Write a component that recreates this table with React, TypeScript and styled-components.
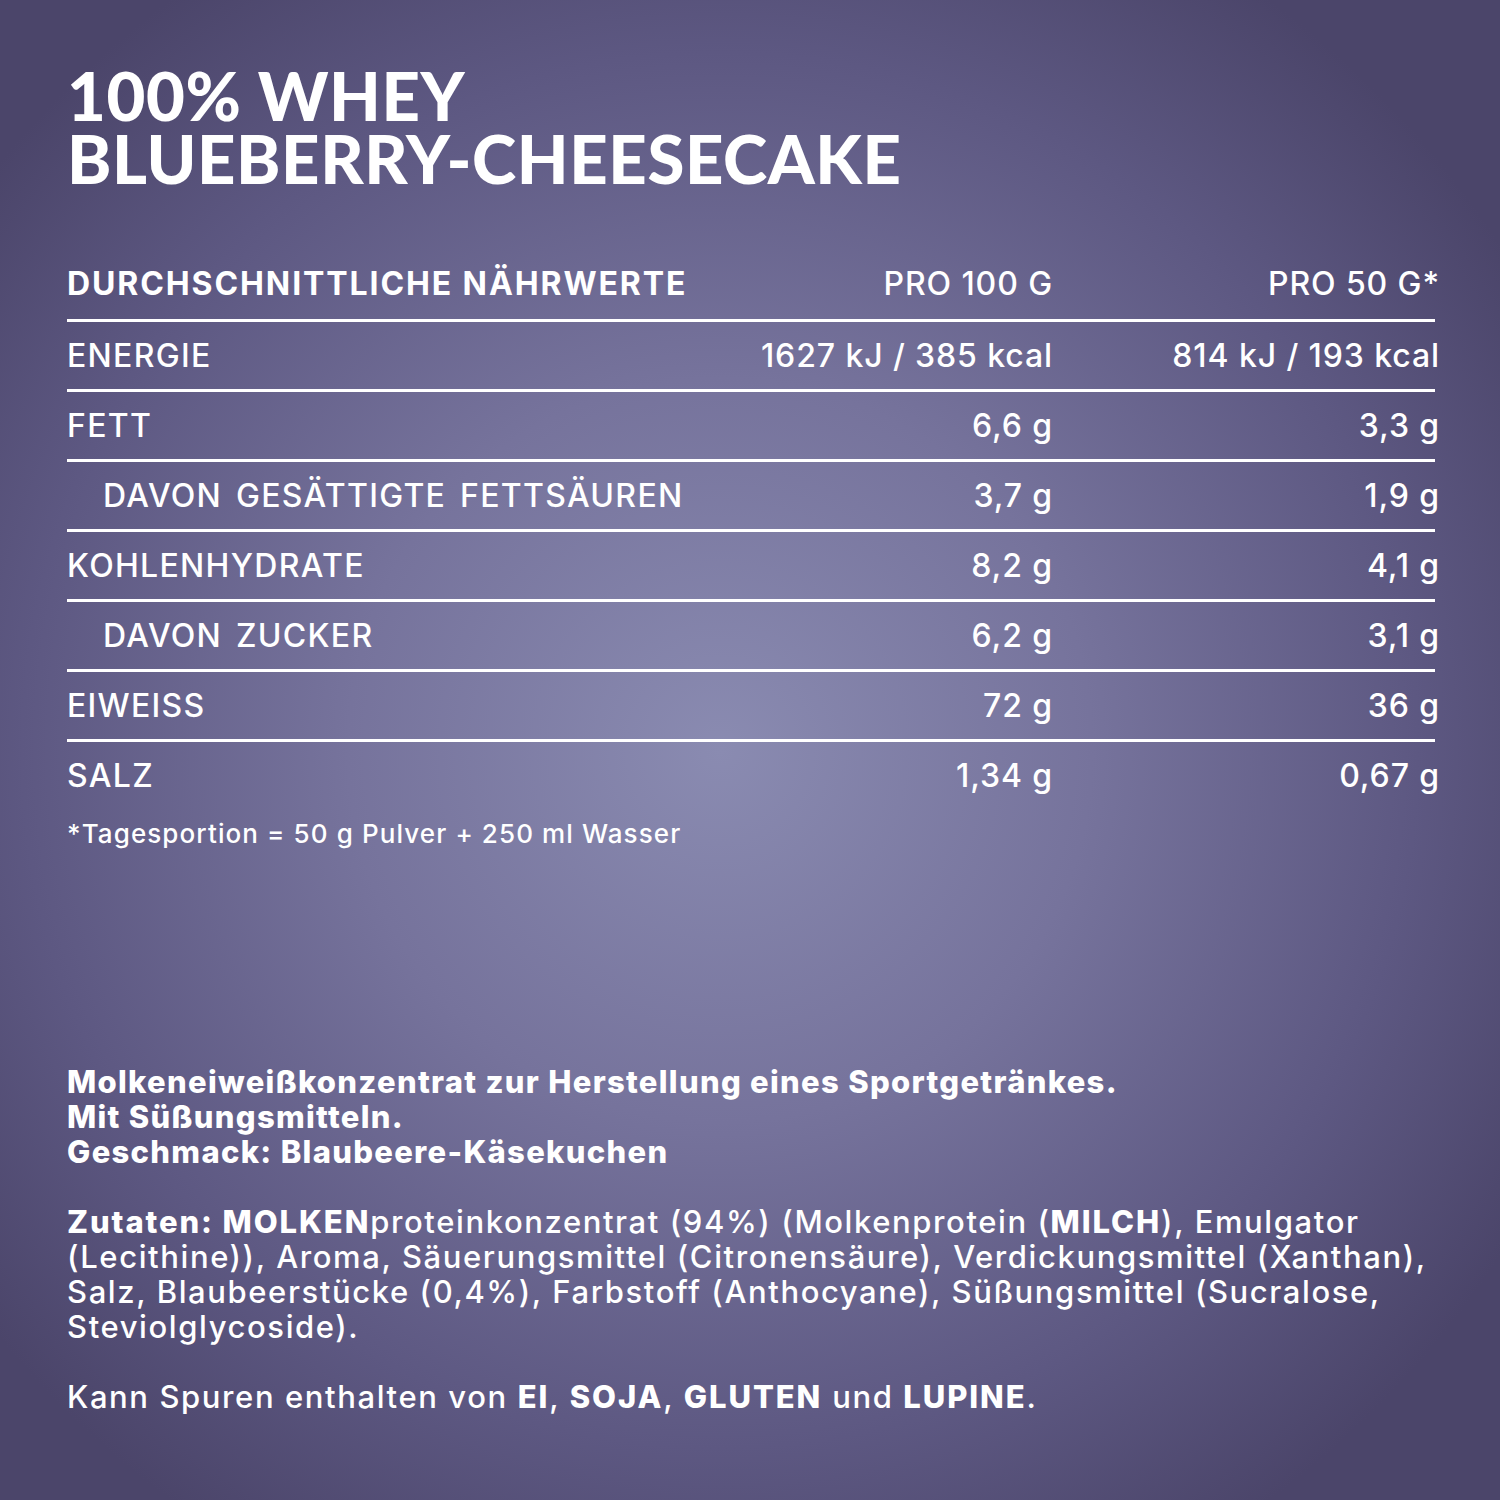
import React from 'react';
import styled, { createGlobalStyle } from 'styled-components';

const GlobalStyle = createGlobalStyle`
  html, body {
    margin: 0;
    padding: 0;
  }
  body {
    font-family: Inter, Lato, 'Noto Sans', sans-serif;
    color: #ffffff;
  }
`;

const Page = styled.main`
  width: 1500px;
  height: 1500px;
  box-sizing: border-box;
  padding: 64px 0 0 67px;
  background: radial-gradient(
    ellipse 62% 62% at 48% 50%,
    #8a8bb1 0%,
    #76739c 40%,
    #5d5882 75%,
    #4b456a 100%
  );
  display: flex;
  flex-direction: column;
`;

const Title = styled.h1`
  margin: 0;
  font-family: Lato, Inter, sans-serif;
  font-size: 67px;
  line-height: 63px;
  font-weight: 900;
  letter-spacing: 0.6px;
  text-transform: uppercase;
`;

const Table = styled.section`
  margin-top: 58px;
  width: 1368px;
`;

const Row = styled.div<{ $head?: boolean; $last?: boolean }>`
  display: grid;
  grid-template-columns: 1fr 363px 382px;
  align-items: center;
  height: ${(p) => (p.$head ? 71 : 67)}px;
  border-bottom: ${(p) => (p.$last ? 'none' : '3px solid #ffffff')};
  font-size: 32px;
  letter-spacing: 0.9px;
  font-weight: 500;
`;

const Label = styled.span<{ $indent?: boolean; $head?: boolean }>`
  padding-left: ${(p) => (p.$indent ? 36 : 0)}px;
  text-transform: uppercase;
  font-weight: ${(p) => (p.$head ? 700 : 500)};
  letter-spacing: ${(p) => (p.$head ? 1.9 : 1.3)}px;
  word-spacing: ${(p) => (p.$indent ? 4 : 0)}px;
`;

const Value = styled.span<{ $wide?: boolean }>`
  text-align: right;
  margin-right: ${(p) => (p.$wide ? -5 : 0)}px;
`;

const Footnote = styled.p`
  margin: 10px 0 0;
  font-size: 26px;
  line-height: 30px;
  font-weight: 500;
  letter-spacing: 1.1px;
`;

const Info = styled.section`
  margin-top: 215px;
  font-size: 31px;
  line-height: 35px;
  white-space: nowrap;
`;

const Lead = styled.p`
  margin: 0;
  font-weight: 800;
  letter-spacing: 1.3px;
`;

const Para = styled.p`
  margin: 35px 0 0;
  font-weight: 500;
  letter-spacing: 1.6px;

  b {
    font-weight: 800;
    letter-spacing: 1.9px;
  }
`;

const ROWS: { label: string; per100: string; per50: string; indent?: boolean }[] = [
  { label: 'Energie', per100: '1627 kJ / 385 kcal', per50: '814 kJ / 193 kcal' },
  { label: 'Fett', per100: '6,6 g', per50: '3,3 g' },
  { label: 'davon gesättigte Fettsäuren', per100: '3,7 g', per50: '1,9 g', indent: true },
  { label: 'Kohlenhydrate', per100: '8,2 g', per50: '4,1 g' },
  { label: 'davon Zucker', per100: '6,2 g', per50: '3,1 g', indent: true },
  { label: 'Eiweiss', per100: '72 g', per50: '36 g' },
  { label: 'Salz', per100: '1,34 g', per50: '0,67 g' },
];

export default function App(): JSX.Element {
  return (
    <>
      <GlobalStyle />
      <Page>
        <Title>
          100% Whey
          <br />
          Blueberry-Cheesecake
        </Title>
        <Table>
          <Row $head>
            <Label $head>Durchschnittliche Nährwerte</Label>
            <Value>PRO 100 G</Value>
            <Value $wide>PRO 50 G*</Value>
          </Row>
          {ROWS.map((row, i) => (
            <Row key={row.label} $last={i === ROWS.length - 1}>
              <Label $indent={row.indent}>{row.label}</Label>
              <Value>{row.per100}</Value>
              <Value $wide>{row.per50}</Value>
            </Row>
          ))}
        </Table>
        <Footnote>*Tagesportion = 50 g Pulver + 250 ml Wasser</Footnote>
        <Info>
          <Lead>
            Molkeneiweißkonzentrat zur Herstellung eines Sportgetränkes.
            <br />
            Mit Süßungsmitteln.
            <br />
            Geschmack: Blaubeere-Käsekuchen
          </Lead>
          <Para>
            <b>Zutaten: MOLKEN</b>proteinkonzentrat (94%) (Molkenprotein (<b>MILCH</b>), Emulgator
            <br />
            (Lecithine)), Aroma, Säuerungsmittel (Citronensäure), Verdickungsmittel (Xanthan),
            <br />
            Salz, Blaubeerstücke (0,4%), Farbstoff (Anthocyane), Süßungsmittel (Sucralose,
            <br />
            Steviolglycoside).
          </Para>
          <Para>
            Kann Spuren enthalten von <b>EI</b>, <b>SOJA</b>, <b>GLUTEN</b> und <b>LUPINE</b>.
          </Para>
        </Info>
      </Page>
    </>
  );
}
